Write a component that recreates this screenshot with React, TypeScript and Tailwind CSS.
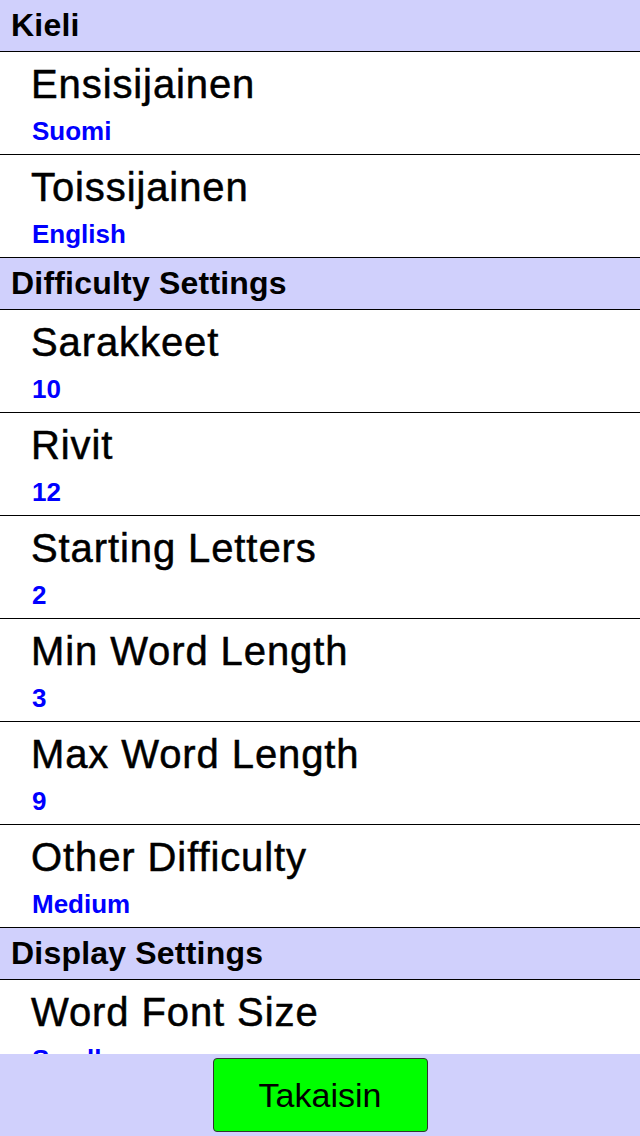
import React from "react";

type Row = { title: string; value: string };
type Section = { header: string; rows: Row[] };

const sections: Section[] = [
  {
    header: "Kieli",
    rows: [
      { title: "Ensisijainen", value: "Suomi" },
      { title: "Toissijainen", value: "English" },
    ],
  },
  {
    header: "Difficulty Settings",
    rows: [
      { title: "Sarakkeet", value: "10" },
      { title: "Rivit", value: "12" },
      { title: "Starting Letters", value: "2" },
      { title: "Min Word Length", value: "3" },
      { title: "Max Word Length", value: "9" },
      { title: "Other Difficulty", value: "Medium" },
    ],
  },
  {
    header: "Display Settings",
    rows: [{ title: "Word Font Size", value: "Small" }],
  },
];

export default function App() {
  return (
    <div
      className="flex h-[1136px] w-[640px] flex-col overflow-hidden bg-white text-black"
      style={{ fontFamily: '"Liberation Sans", Arial, sans-serif' }}
    >
      <div className="min-h-0 flex-1 overflow-hidden">
        {sections.map((s) => (
          <div key={s.header}>
            <div className="h-[52px] border-b border-black bg-[#d0d0fc] pl-[11px] text-[32px] font-bold leading-[51px] tracking-[0.2px]">
              {s.header}
            </div>
            {s.rows.map((r) => (
              <div
                key={r.title}
                className="h-[103px] border-b border-black pt-[8px]"
              >
                <div className="pl-[31px] text-[40px] leading-[48px] tracking-[0.9px] [-webkit-text-stroke:0.5px_black]">
                  {r.title}
                </div>
                <div className="mt-[7px] pl-[32px] text-[26px] font-bold leading-[32px] text-[#0000ff]">
                  {r.value}
                </div>
              </div>
            ))}
          </div>
        ))}
      </div>
      <div className="flex h-[82px] shrink-0 items-start justify-center bg-[#d0d0fc] pt-[4px]">
        <button className="h-[74px] w-[215px] rounded-[4px] border border-[#333333] bg-[#00ff00] text-[34px] leading-none text-black">
          Takaisin
        </button>
      </div>
    </div>
  );
}
